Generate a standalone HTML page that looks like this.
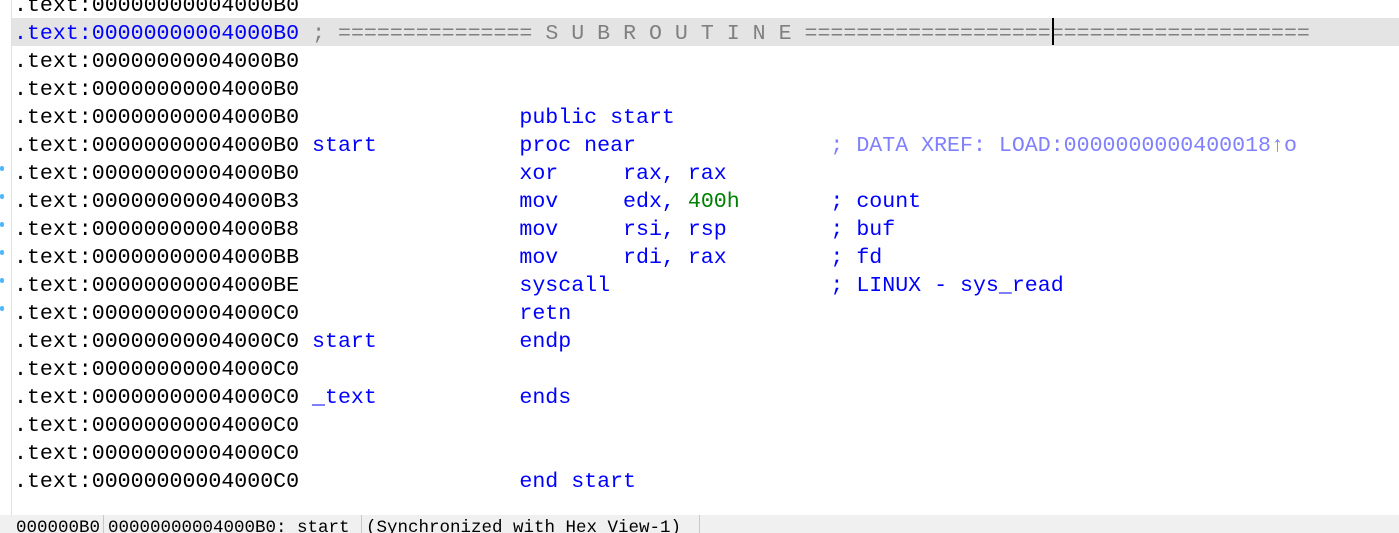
<html><head><style>
body{margin:0;width:1399px;height:533px;overflow:hidden;background:#fff;position:relative;font-family:"Liberation Mono",monospace}
#lm{position:absolute;left:0;top:0;width:11px;height:516px;background:#fff;border-right:1px solid #e0e0e0}
#hl{position:absolute;left:12px;top:18px;width:1387px;height:28px;background:#e4e4e4}
#cur{position:absolute;left:1052px;top:18px;width:2px;height:27px;background:#000}
pre{position:absolute;left:14px;top:-8px;margin:0;font-size:21.6px;line-height:28px;color:#000;font-family:"Liberation Mono",monospace}
.b{color:#0000ff}.g{color:#808080}.x{color:#8080ff}.n{color:#008000}.k{color:#0000c0}
.dot{position:absolute;left:0;width:4px;height:5px;background:#4db8ff;border-radius:2px}
#sb{position:absolute;left:0;top:515px;width:1399px;height:18px;background:#f0f0f0;font-size:17.5px;color:#000;white-space:pre;line-height:26px;overflow:hidden}
#sb span{position:absolute;top:0;height:18px;border-right:1px solid #c8c8c8;overflow:hidden}
</style></head><body>
<div id="lm"></div>
<div id="hl"></div>
<pre>.text:00000000004000B0
<span class="b">.text:00000000004000B0</span> <span class="g">; =============== S U B R O U T I N E =======================================</span>
.text:00000000004000B0
.text:00000000004000B0
.text:00000000004000B0                 <span class="b">public start</span>
.text:00000000004000B0 <span class="b">start</span>           <span class="b">proc near</span>               <span class="x">; DATA XREF: LOAD:0000000000400018↑o</span>
.text:00000000004000B0                 <span class="b">xor     rax, rax</span>
.text:00000000004000B3                 <span class="b">mov     edx, </span><span class="n">400h</span>       <span class="b">; count</span>
.text:00000000004000B8                 <span class="b">mov     rsi, rsp</span>        <span class="b">; buf</span>
.text:00000000004000BB                 <span class="b">mov     rdi, rax</span>        <span class="b">; fd</span>
.text:00000000004000BE                 <span class="b">syscall</span>                 <span class="b">; LINUX - sys_read</span>
.text:00000000004000C0                 <span class="b">retn</span>
.text:00000000004000C0 <span class="b">start</span>           <span class="b">endp</span>
.text:00000000004000C0
.text:00000000004000C0 <span class="b">_text</span>           <span class="b">ends</span>
.text:00000000004000C0
.text:00000000004000C0
.text:00000000004000C0                 <span class="b">end start</span>
</pre>
<div id="cur"></div>
<div class="dot" style="top:166px"></div>
<div class="dot" style="top:194px"></div>
<div class="dot" style="top:222px"></div>
<div class="dot" style="top:250px"></div>
<div class="dot" style="top:278px"></div>
<div class="dot" style="top:306px"></div>
<div id="sb"><span style="left:16px;width:87px">000000B0</span><span style="left:108px;width:253px">00000000004000B0: start</span><span style="left:366px;width:333px">(Synchronized with Hex View-1)</span></div>
</body></html>
